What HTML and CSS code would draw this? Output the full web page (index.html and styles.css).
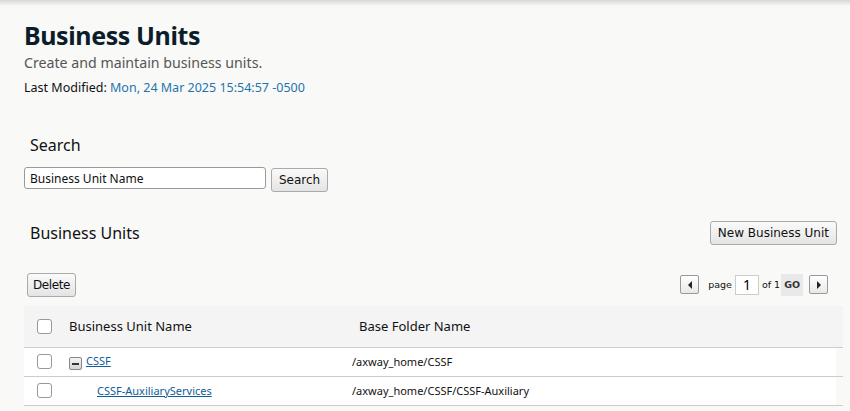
FILE: index.html
```html
<!DOCTYPE html>
<html>
<head>
<meta charset="utf-8">
<link rel="stylesheet" href="styles.css">
</head>
<body>
<div class="topshade"></div>
<div class="page">
  <header class="head">
    <h1 class="title">Business Units</h1>
    <p class="subtitle">Create and maintain business units.</p>
    <p class="modified">Last Modified: <span class="stamp">Mon, 24 Mar 2025 15:54:57 -0500</span></p>
  </header>

  <section class="search">
    <h2 class="section-title">Search</h2>
    <div class="search-row">
      <input class="search-input" type="text" value="Business Unit Name">
      <button class="btn">Search</button>
    </div>
  </section>

  <section class="units">
    <div class="units-head">
      <h2 class="section-title">Business Units</h2>
      <button class="btn">New Business Unit</button>
    </div>
    <div class="toolbar">
      <button class="btn btn-delete">Delete</button>
      <div class="pager">
        <button class="arrow" aria-label="Previous"><svg width="6" height="8" viewBox="0 0 6 8"><path d="M5 0 L1 4 L5 8 Z" fill="#222"/></svg></button>
        <span class="pg-label">page</span>
        <input class="pg-input" type="text" value="1">
        <span class="pg-of">of 1</span>
        <span class="pg-go">GO</span>
        <button class="arrow" aria-label="Next"><svg width="6" height="8" viewBox="0 0 6 8"><path d="M1 0 L5 4 L1 8 Z" fill="#222"/></svg></button>
      </div>
    </div>
    <table class="grid">
      <thead>
        <tr>
          <th class="c-check"><span class="cb"></span></th>
          <th class="c-name">Business Unit Name</th>
          <th class="c-folder">Base Folder Name</th>
        </tr>
      </thead>
      <tbody>
        <tr>
          <td class="c-check"><span class="cb"></span></td>
          <td class="c-name"><span class="toggle"><span class="minus"></span></span><a href="#" class="link">CSSF</a></td>
          <td class="c-folder2">/axway_home/CSSF</td>
        </tr>
        <tr>
          <td class="c-check"><span class="cb"></span></td>
          <td class="c-name"><a href="#" class="link child">CSSF-AuxiliaryServices</a></td>
          <td class="c-folder2">/axway_home/CSSF/CSSF-Auxiliary</td>
        </tr>
      </tbody>
    </table>
  </section>
</div>
</body>
</html>
```

FILE: styles.css
```css
* { box-sizing: border-box; }
html, body { margin: 0; padding: 0; }
body {
  background: #f9f9f8;
  font-family: "Noto Sans", "Open Sans", sans-serif;
  color: #111;
  overflow: hidden;
}
.topshade {
  height: 6px;
  background: linear-gradient(#d8d8d8, rgba(249,249,248,0));
}
.page {
  padding: 0 7px 0 24px;
}
.head { padding-top: 14px; }
.title {
  margin: 0;
  font-size: 25px;
  line-height: 30px;
  font-weight: 700;
  color: #0b1d2a;
  letter-spacing: -0.4px;
}
.subtitle {
  margin: 3px 0 0;
  font-size: 14.2px;
  line-height: 20px;
  color: #555;
}
.modified {
  margin: 6px 0 0;
  font-size: 12.5px;
  line-height: 18px;
  color: #111;
}
.stamp { color: #1f74aa; }

.search { margin-top: 37px; padding-left: 6px; }
.section-title {
  margin: 0;
  font-size: 16px;
  line-height: 22px;
  font-weight: 400;
  color: #111;
}
.search-row {
  display: flex;
  align-items: flex-start;
  gap: 5px;
  margin-top: 11px;
  margin-left: -6px;
}
.search-input {
  width: 242px;
  height: 22px;
  border: 1px solid #999;
  border-radius: 3px;
  padding: 0 5px;
  font: 12px "Noto Sans", sans-serif;
  color: #111;
  background: #fff;
}
.btn {
  height: 24px;
  padding: 0 7px;
  border: 1px solid #aaa;
  border-radius: 3px;
  background: linear-gradient(#fafafa, #e4e4e4);
  font: 12px "DejaVu Sans", sans-serif;
  color: #111;
  margin-top: 1px;
}
.btn-delete { padding: 0 5px; letter-spacing: -0.4px; }

.units { margin-top: 28px; }
.units-head {
  display: flex;
  justify-content: space-between;
  align-items: center;
  padding: 0 6px 0 6px;
}
.toolbar {
  display: flex;
  justify-content: space-between;
  align-items: center;
  margin-top: 27px;
  padding: 0 15px 0 3px;
}
.pager {
  display: flex;
  align-items: center;
  font: 9.5px "DejaVu Sans", sans-serif;
  color: #111;
}
.arrow {
  width: 19px;
  height: 19px;
  padding: 0;
  border: 1px solid #999;
  border-radius: 2px;
  background: linear-gradient(#fff, #e9e9e9);
  display: flex;
  align-items: center;
  justify-content: center;
}
.pg-label { margin-left: 9px; }
.pg-input {
  width: 24px;
  height: 20px;
  margin-left: 3px;
  border: 1px solid #ccc;
  background: #fff;
  text-align: center;
  font: 14px "Noto Sans", sans-serif;
  padding: 0;
}
.pg-of { margin-left: 3px; }
.pg-go {
  margin-left: 1px;
  background: #e9e9e9;
  padding: 0 3px;
  line-height: 22px;
  font-weight: 700;
  color: #333;
}
.pg-go + .arrow { margin-left: 6px; }

.grid {
  width: 100%;
  margin-top: 9px;
  border-collapse: collapse;
  font-size: 11px;
}
.grid thead tr { background: #f4f4f4; }
.grid tbody tr { background: #fff; }
.grid th {
  height: 41px;
  font-weight: 400;
  font-size: 13px;
  text-align: left;
  border-bottom: 1px solid #ccc;
  padding: 0;
}
.grid td {
  height: 29px;
  border-bottom: 1px solid #ccc;
  padding: 0;
}
.c-check { width: 45px; padding-left: 13px !important; }
.grid th.c-name { width: 290px; }
.grid th.c-folder { padding-left: 0; }
.grid td.c-folder2 { padding-left: 0; position: relative; left: -7px; }
.cb {
  display: block;
  width: 15px;
  height: 15px;
  border: 1px solid #999;
  border-radius: 3px;
  background: #fff;
}
.toggle {
  display: inline-flex;
  width: 13px;
  height: 13px;
  border: 1px solid #888;
  border-radius: 2px;
  background: linear-gradient(#f4f4f4, #d4d4d4);
  align-items: center;
  justify-content: center;
  vertical-align: 0;
  margin-right: 4px;
}
.minus { width: 7px; height: 2px; background: #333; }
.link { color: #0e5d9a; text-decoration: underline; }
.link.child { margin-left: 28px; }
```
